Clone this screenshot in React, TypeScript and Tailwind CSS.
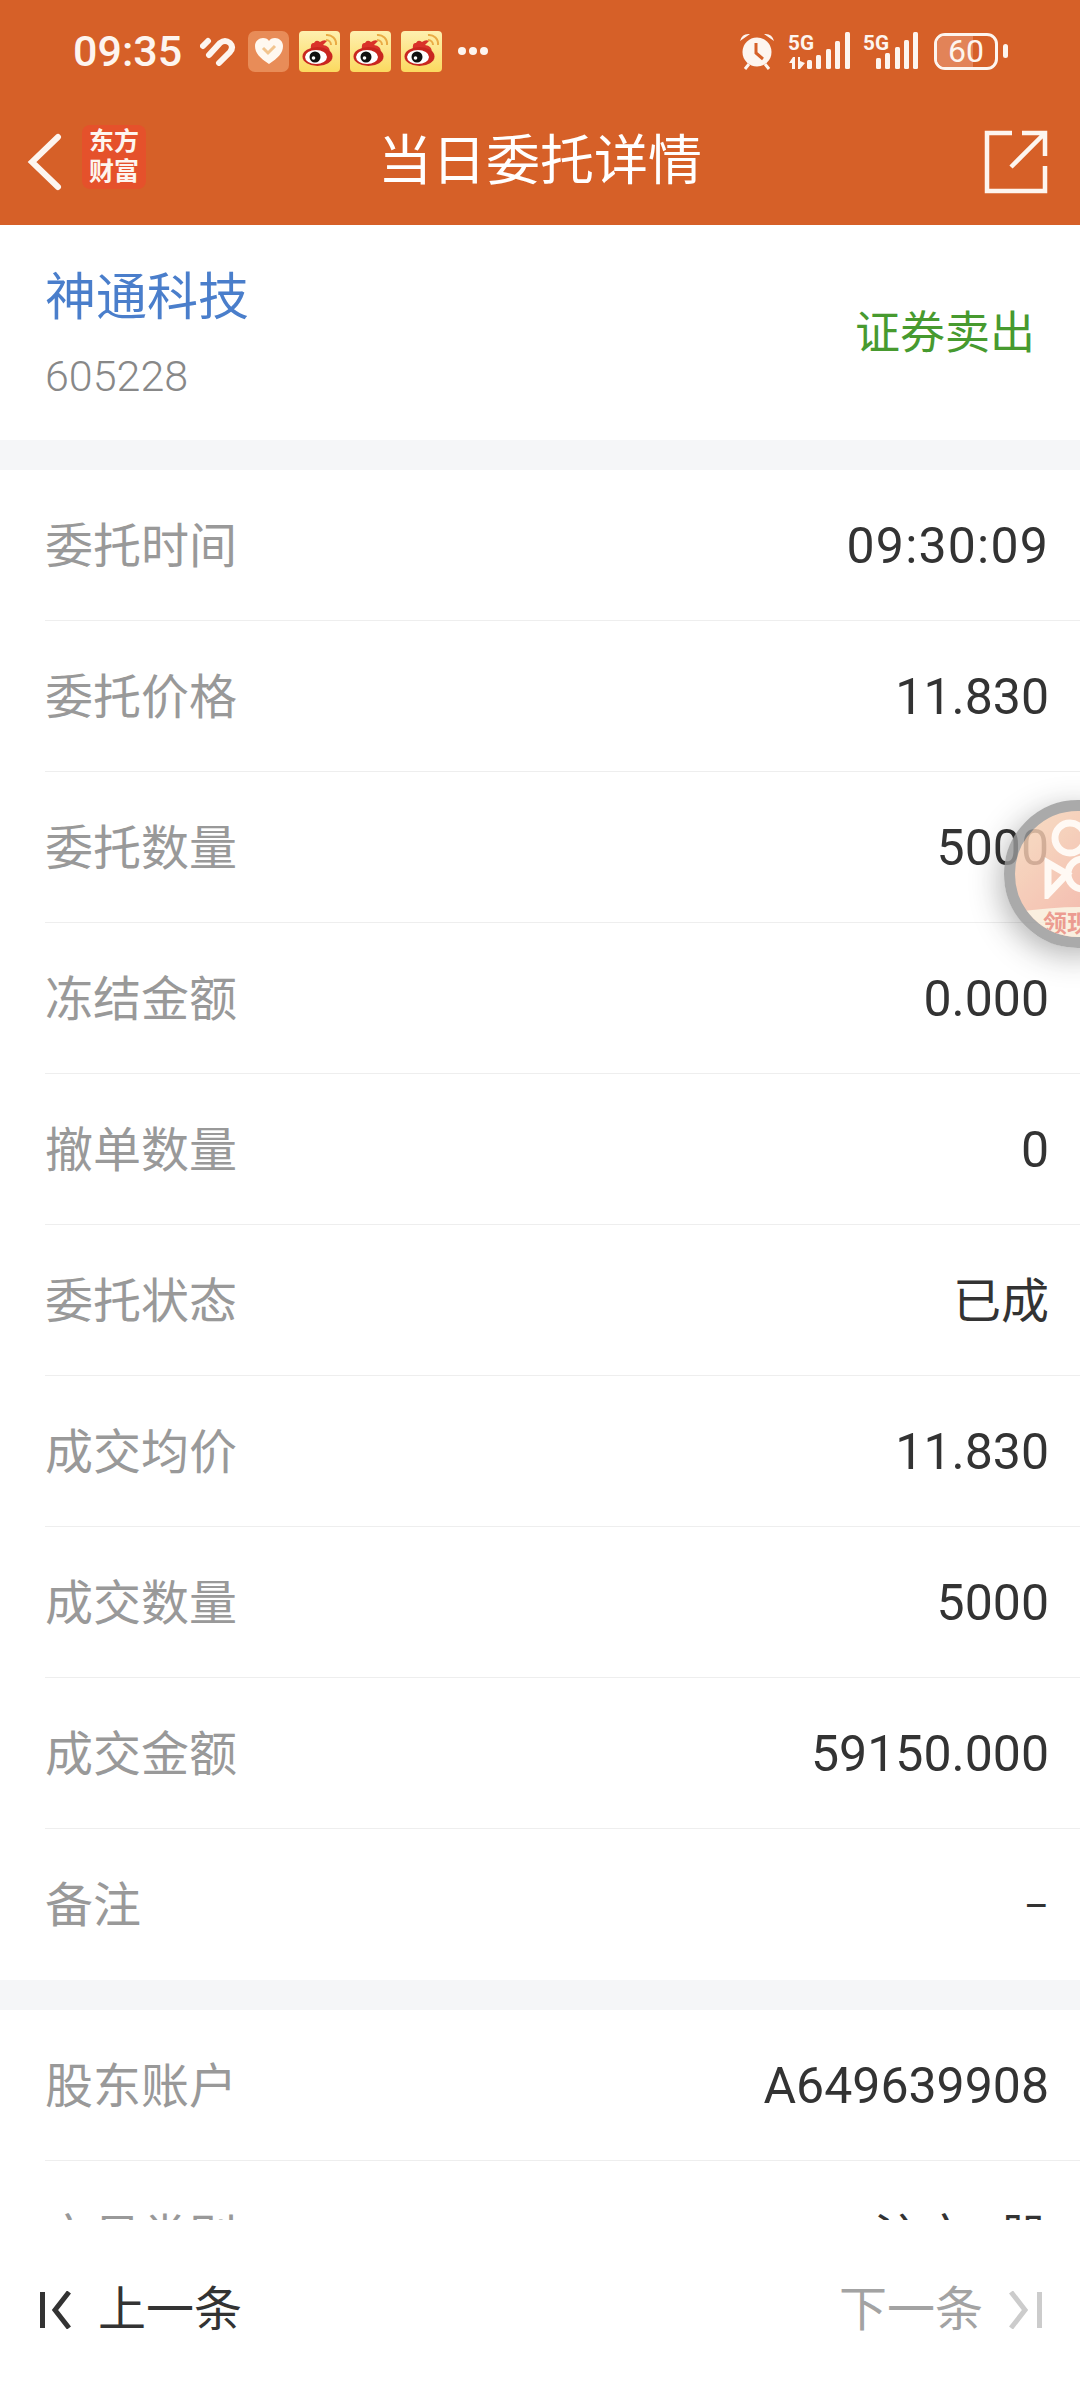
const detailRows = [
  ['委托时间', '09:30:09'],
  ['委托价格', '11.830'],
  ['委托数量', '5000'],
  ['冻结金额', '0.000'],
  ['撤单数量', '0'],
  ['委托状态', '已成'],
  ['成交均价', '11.830'],
  ['成交数量', '5000'],
  ['成交金额', '59150.000'],
  ['备注', '–'],
];

const accountRows = [
  ['股东账户', 'A649639908'],
  ['交易类别', '沪市A股'],
];

const valueClass = (value: string) => {
  if (value === '–') return 'text-[38px] text-[#333333]';
  if (value.includes(':')) return 'text-[50px] tracking-[1.2px] text-[#333333]';
  if (/^[\d.A-Z]+$/.test(value)) return 'text-[50px] text-[#333333]';
  return 'text-[48px] text-[#333333]';
};

const Row = ({ label, value, last }: { label: string; value: string; last?: boolean }) => (
  <div className="pl-[45px]">
    <div className={`flex h-[151px] items-center justify-between pt-[3px] pr-[31px] ${last ? '' : 'border-b border-[#eeeeee]'}`}>
      <span className="text-[48px] text-[#999999]">{label}</span>
      <span className={valueClass(value)}>{value}</span>
    </div>
  </div>
);

const WeiboIcon = () => (
  <svg width="41" height="41" viewBox="0 0 41 41" className="rounded-[4px]">
    <defs>
      <linearGradient id="wb" x1="0" y1="0" x2="0" y2="1">
        <stop offset="0" stopColor="#fef0b0" />
        <stop offset="1" stopColor="#fbd95f" />
      </linearGradient>
    </defs>
    <rect width="41" height="41" fill="url(#wb)" />
    <path d="M12 19 Q11 11 15 12 Q17 8 21 11 Q25 8 28 10 L24 14 Q31 15 31 21 Z" fill="#d9322a" />
    <ellipse cx="18.5" cy="25.5" rx="15" ry="9.5" fill="#c9261f" />
    <ellipse cx="17" cy="26" rx="11" ry="7" fill="#ffffff" />
    <circle cx="16" cy="26" r="5.5" fill="#111111" />
    <circle cx="14.5" cy="27" r="1.8" fill="#ffffff" />
    <path d="M27 4 A9 9 0 0 1 37 14 M27 9 A5 5 0 0 1 32 14" fill="none" stroke="#e9ab45" strokeWidth="2" />
  </svg>
);

const Signal = ({ arrows }: { arrows?: boolean }) => {
  const bars = arrows ? [19, 28, 38, 47, 57] : [13, 22, 32, 41, 50];
  const heights = arrows ? [9, 14, 20, 28, 37] : [11, 16, 22, 29, 37];
  return (
    <svg width={arrows ? 62 : 55} height="38" viewBox={arrows ? '0 0 62 38' : '0 0 55 38'} fill="#fdf5ef">
      <text x="0" y="18" fontSize="21" fontWeight="700" fontFamily="Roboto, sans-serif" textLength="26" lengthAdjust="spacingAndGlyphs">5G</text>
      {arrows && <path d="M1 31 L5 25 H7 V37 H4 V31 Z M10 25 H12 V29 L17 31 L12 37 H10 Z" />}
      {bars.map((x, i) => (
        <rect key={x} x={x} y={37 - heights[i]} width="5" height={heights[i]} rx="1.5" />
      ))}
    </svg>
  );
};

export default function App() {
  return (
    <div className="relative flex h-[2400px] w-[1080px] flex-col overflow-hidden bg-white font-['Roboto','Noto_Sans_CJK_SC',sans-serif]">
      {/* status bar */}
      <div className="bg-[#d66028]">
        <div className="flex h-[100px] items-center justify-between pt-[2px] pl-[73px] pr-[72px]">
          <div className="flex items-center">
            <span className="w-[112px] text-[43px] font-medium leading-none text-[#fdf5ef]">09:35</span>
            <svg width="36" height="30" viewBox="0 0 36 30" className="ml-[15px]" fill="none" stroke="#fdf5ef" strokeWidth="6" strokeLinecap="round">
              <path d="M3 10 L8 5 M9 19 L20 7 Q25 3 30 7 Q34 11 30 16 L19 27" />
            </svg>
            <div className="ml-[12px] flex h-[41px] w-[41px] items-center justify-center rounded-[7px] bg-[#e88c58]">
              <svg width="30" height="28" viewBox="0 0 30 28">
                <path d="M15 27 C6 21 1 16 1 9 C1 4 5 1 9 1 C12 1 14 2 15 4 C16 2 18 1 21 1 C25 1 29 4 29 9 C29 16 24 21 15 27 Z" fill="#fff8f0" />
                <path d="M9 11 L14 16 L21 9" fill="none" stroke="#f2c48e" strokeWidth="3" />
              </svg>
            </div>
            <div className="ml-[10px] flex gap-[10px]">
              <WeiboIcon />
              <WeiboIcon />
              <WeiboIcon />
            </div>
            <div className="ml-[16px] flex gap-[3px]">
              <span className="h-[8px] w-[8px] rounded-full bg-[#fdf5ef]" />
              <span className="h-[8px] w-[8px] rounded-full bg-[#fdf5ef]" />
              <span className="h-[8px] w-[8px] rounded-full bg-[#fdf5ef]" />
            </div>
          </div>
          <div className="flex items-center">
            <svg width="34" height="38" viewBox="0 0 34 38">
              <circle cx="17" cy="20" r="14.5" fill="#fdf5ef" />
              <path d="M16 11 V21 L23 27" fill="none" stroke="#d66028" strokeWidth="3" />
              <path d="M0 9 Q2 1 10 2 Z M34 9 Q32 1 24 2 Z" fill="#fdf5ef" />
              <path d="M5 37 L9 32 M29 37 L25 32" stroke="#fdf5ef" strokeWidth="3" />
            </svg>
            <div className="ml-[14px]"><Signal arrows /></div>
            <div className="ml-[13px]"><Signal /></div>
            <div className="relative ml-[16px] flex h-[37px] w-[64px] items-center justify-center overflow-hidden rounded-[11px] border-[3px] border-[#fdf5ef]">
              <div className="absolute inset-y-0 left-0 w-[62%] bg-[#e28358]" />
              <span className="relative text-[32px] leading-none text-[#fdf5ef]">60</span>
            </div>
            <div className="ml-[5px] h-[14px] w-[5px] rounded-full bg-[#fdf5ef]" />
          </div>
        </div>

        {/* title bar */}
        <div className="relative flex h-[125px] items-center pb-[2px]">
          <svg width="36" height="58" viewBox="0 0 36 58" className="ml-[26px]" fill="none" stroke="#fdf5ef" strokeWidth="6" strokeLinecap="round">
            <path d="M32 4 L6 29 L32 54" />
          </svg>
          <div className="mb-[9px] ml-[20px] flex h-[64px] w-[64px] flex-col items-center justify-center rounded-[8px] bg-[#e5512b] text-[25px] font-bold leading-[30px] text-[#fdf5ef]">
            <span>东方</span>
            <span>财富</span>
          </div>
          <span className="absolute left-1/2 -translate-x-1/2 text-[54px] text-white">当日委托详情</span>
          <svg width="64" height="64" viewBox="0 0 64 64" className="absolute right-[32px]" fill="none" stroke="#fdf5ef" strokeWidth="4.5">
            <path d="M28 3 H3 V61 H61 V36" />
            <path d="M61 26 V3 H38 M61 3 L27 37" />
          </svg>
        </div>
      </div>

      {/* stock header + detail list */}
      <div className="flex-1 overflow-hidden">
        <div className="flex h-[215px] items-center justify-between px-[45px]">
          <div className="flex flex-col self-start pt-[38px]">
            <span className="text-[51px] leading-[70px] text-[#4a7ecb]">神通科技</span>
            <span className="mt-[18px] text-[43px] font-light leading-[50px] text-[#888888]">605228</span>
          </div>
          <span className="mt-[2px] text-[45px] text-[#479a2f]">证券卖出</span>
        </div>
        <div className="h-[30px] bg-[#f5f6f8]" />
        {detailRows.map(([label, value], i) => (
          <Row key={label} label={label} value={value} last={i === detailRows.length - 1} />
        ))}
        <div className="h-[30px] bg-[#f5f6f8]" />
        {accountRows.map(([label, value]) => (
          <Row key={label} label={label} value={value} />
        ))}
      </div>

      {/* bottom pager */}
      <div className="flex h-[180px] items-center justify-between bg-white pl-[40px] pr-[38px]">
        <div className="flex items-center">
          <svg width="32" height="38" viewBox="0 0 32 38" fill="none" stroke="#333333" strokeWidth="5">
            <path d="M2.5 1 V37 M29 1 L15 19 L29 37" />
          </svg>
          <span className="ml-[26px] text-[48px] text-[#333333]">上一条</span>
        </div>
        <div className="flex items-center">
          <span className="text-[48px] text-[#a3a3a3]">下一条</span>
          <svg width="34" height="38" viewBox="0 0 34 38" className="ml-[25px]" fill="none" stroke="#cccccc" strokeWidth="5">
            <path d="M31.5 1 V37 M3 1 L17 19 L3 37" />
          </svg>
        </div>
      </div>

      {/* floating video badge, see-through so the row text shows under it */}
      <div className="absolute right-[-72px] top-[800px] h-[148px] w-[148px] overflow-hidden rounded-full border-[11px] border-[#989898] bg-gradient-to-br from-[#f6d8b8] to-[#ee9c94] opacity-[0.82] shadow-[-4px_8px_30px_rgba(0,0,0,0.35)]">
        <svg width="80" height="80" viewBox="0 0 80 80" className="absolute left-[28px] top-[8px]" fill="none" stroke="#fff8f2" strokeWidth="7">
          <circle cx="27" cy="19" r="15" />
          <path d="M5 44 L24 55 L5 75 Z" />
          <circle cx="40" cy="55" r="15" />
        </svg>
        <div className="absolute bottom-0 left-[-20px] h-[30px] w-[180px] rounded-t-[50%] bg-[#f9ecd8]" />
        <span className="absolute bottom-[1px] left-[28px] whitespace-nowrap text-[24px] font-bold leading-none text-[#e9877a]">领现金</span>
      </div>
    </div>
  );
}
